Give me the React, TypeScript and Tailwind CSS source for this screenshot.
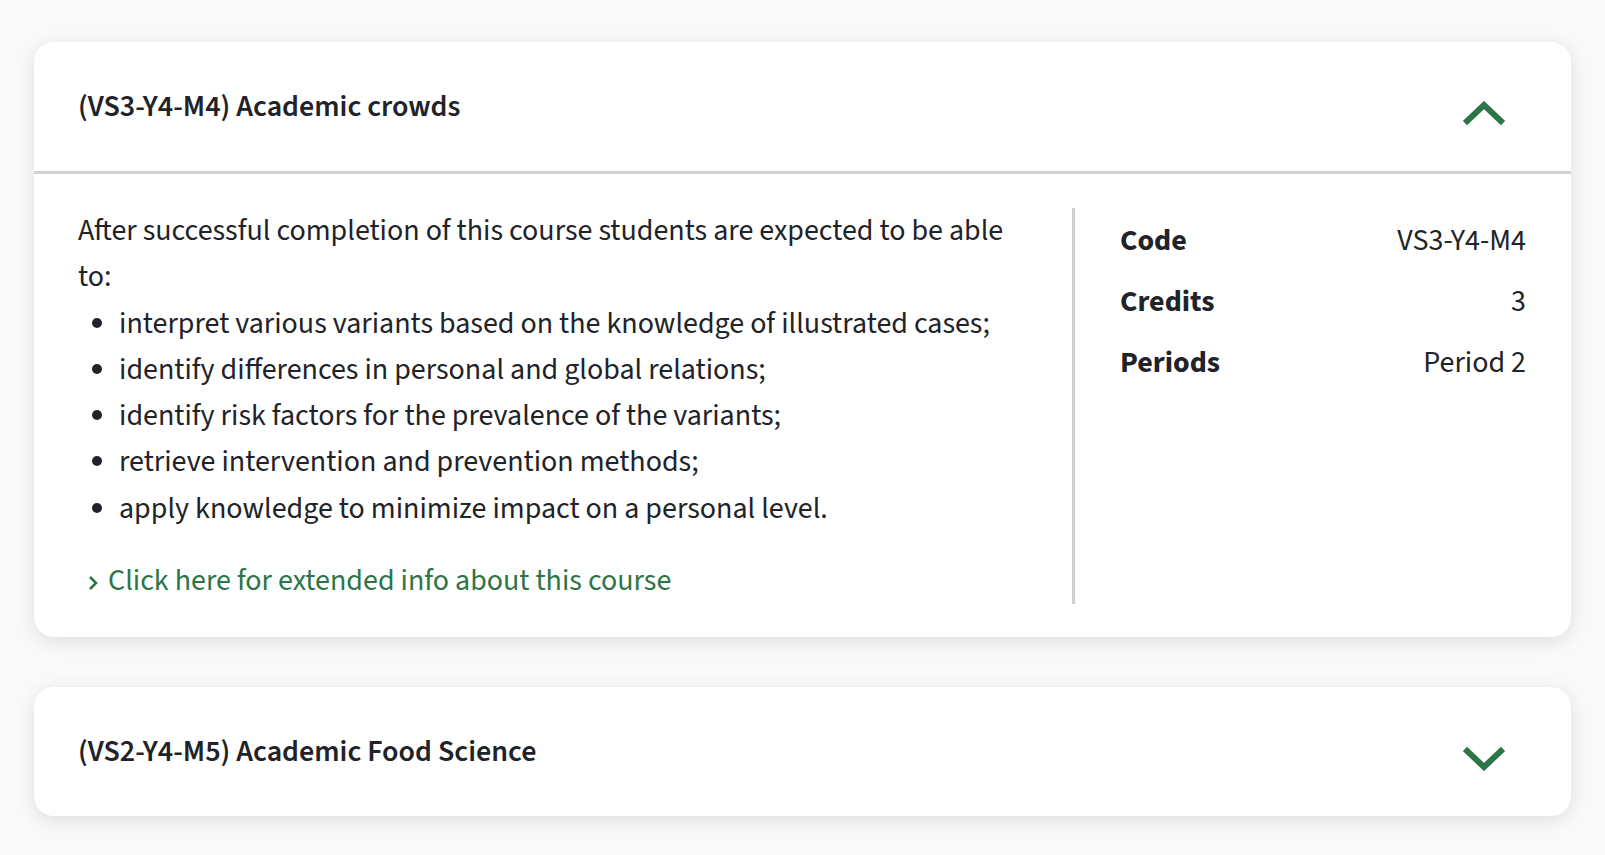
import React, { useState } from "react";

type Course = {
  code: string;
  title: string;
  credits: string;
  periods: string;
  intro: string;
  outcomes: string[];
};

const courses: Course[] = [
  {
    code: "VS3-Y4-M4",
    title: "Academic crowds",
    credits: "3",
    periods: "Period 2",
    intro: "After successful completion of this course students are expected to be able to:",
    outcomes: [
      "interpret various variants based on the knowledge of illustrated cases;",
      "identify differences in personal and global relations;",
      "identify risk factors for the prevalence of the variants;",
      "retrieve intervention and prevention methods;",
      "apply knowledge to minimize impact on a personal level.",
    ],
  },
  {
    code: "VS2-Y4-M5",
    title: "Academic Food Science",
    credits: "4",
    periods: "Period 3",
    intro: "After successful completion of this course students are expected to be able to:",
    outcomes: [],
  },
];

const Chevron: React.FC<{ up: boolean }> = ({ up }) => (
  <svg width="42" height="25" viewBox="0 0 42 25" className="mt-[14px] shrink-0">
    <polyline
      points={up ? "2,22 21,4 40,22" : "2,3 21,21 40,3"}
      fill="none"
      stroke="#2c7547"
      strokeWidth="6"
    />
  </svg>
);

const CourseCard: React.FC<{ course: Course; defaultOpen?: boolean }> = ({ course, defaultOpen }) => {
  const [open, setOpen] = useState<boolean>(!!defaultOpen);

  return (
    <div className="bg-white rounded-[20px] shadow-[0_4px_18px_rgba(0,0,0,0.11)] overflow-hidden">
      <button
        type="button"
        onClick={() => setOpen(!open)}
        className="w-full h-[129px] flex items-center justify-between pl-[44px] pr-[66px] text-left cursor-pointer"
      >
        <span className="text-[30px] font-semibold text-[#212328]">
          ({course.code}) {course.title}
        </span>
        <Chevron up={open} />
      </button>
      {open && (
        <div className="border-t-[3px] border-[#d2d2d2] flex pt-[34px] pb-[33px]">
          <div className="w-[1041px] pl-[44px] pr-[40px] border-r-[3px] border-[#cfcfcf] text-[30px] leading-[46.3px] text-[#212328]">
            <p>{course.intro}</p>
            <ul className="list-disc pl-[41px]">
              {course.outcomes.map((o) => (
                <li key={o}>{o}</li>
              ))}
            </ul>
            <a href="#" className="mt-[26px] flex items-center text-[#2c7547] pl-[10px]">
              <svg width="10" height="16" viewBox="0 0 10 16" className="mr-[10px] mt-[3px] shrink-0">
                <polyline points="2,2 8,8 2,14" fill="none" stroke="#2c7547" strokeWidth="2.6" />
              </svg>
              Click here for extended info about this course
            </a>
          </div>
          <div className="flex-1 pl-[45px] pr-[45px] pt-[2px] text-[30px] text-[#212328]">
            <div className="flex justify-between h-[61px] items-center">
              <span className="font-bold">Code</span>
              <span>{course.code}</span>
            </div>
            <div className="flex justify-between h-[61px] items-center">
              <span className="font-bold">Credits</span>
              <span>{course.credits}</span>
            </div>
            <div className="flex justify-between h-[61px] items-center">
              <span className="font-bold">Periods</span>
              <span>{course.periods}</span>
            </div>
          </div>
        </div>
      )}
    </div>
  );
};

const App: React.FC = () => {
  return (
    <div
      className="min-h-screen bg-[#f9f9f9] px-[34px] pt-[42px] pb-[40px] flex flex-col gap-[50px]"
      style={{ fontFamily: '"Source Sans 3", "Source Sans Pro", Lato, sans-serif' }}
    >
      <CourseCard course={courses[0]} defaultOpen />
      <CourseCard course={courses[1]} />
    </div>
  );
};

export default App;
